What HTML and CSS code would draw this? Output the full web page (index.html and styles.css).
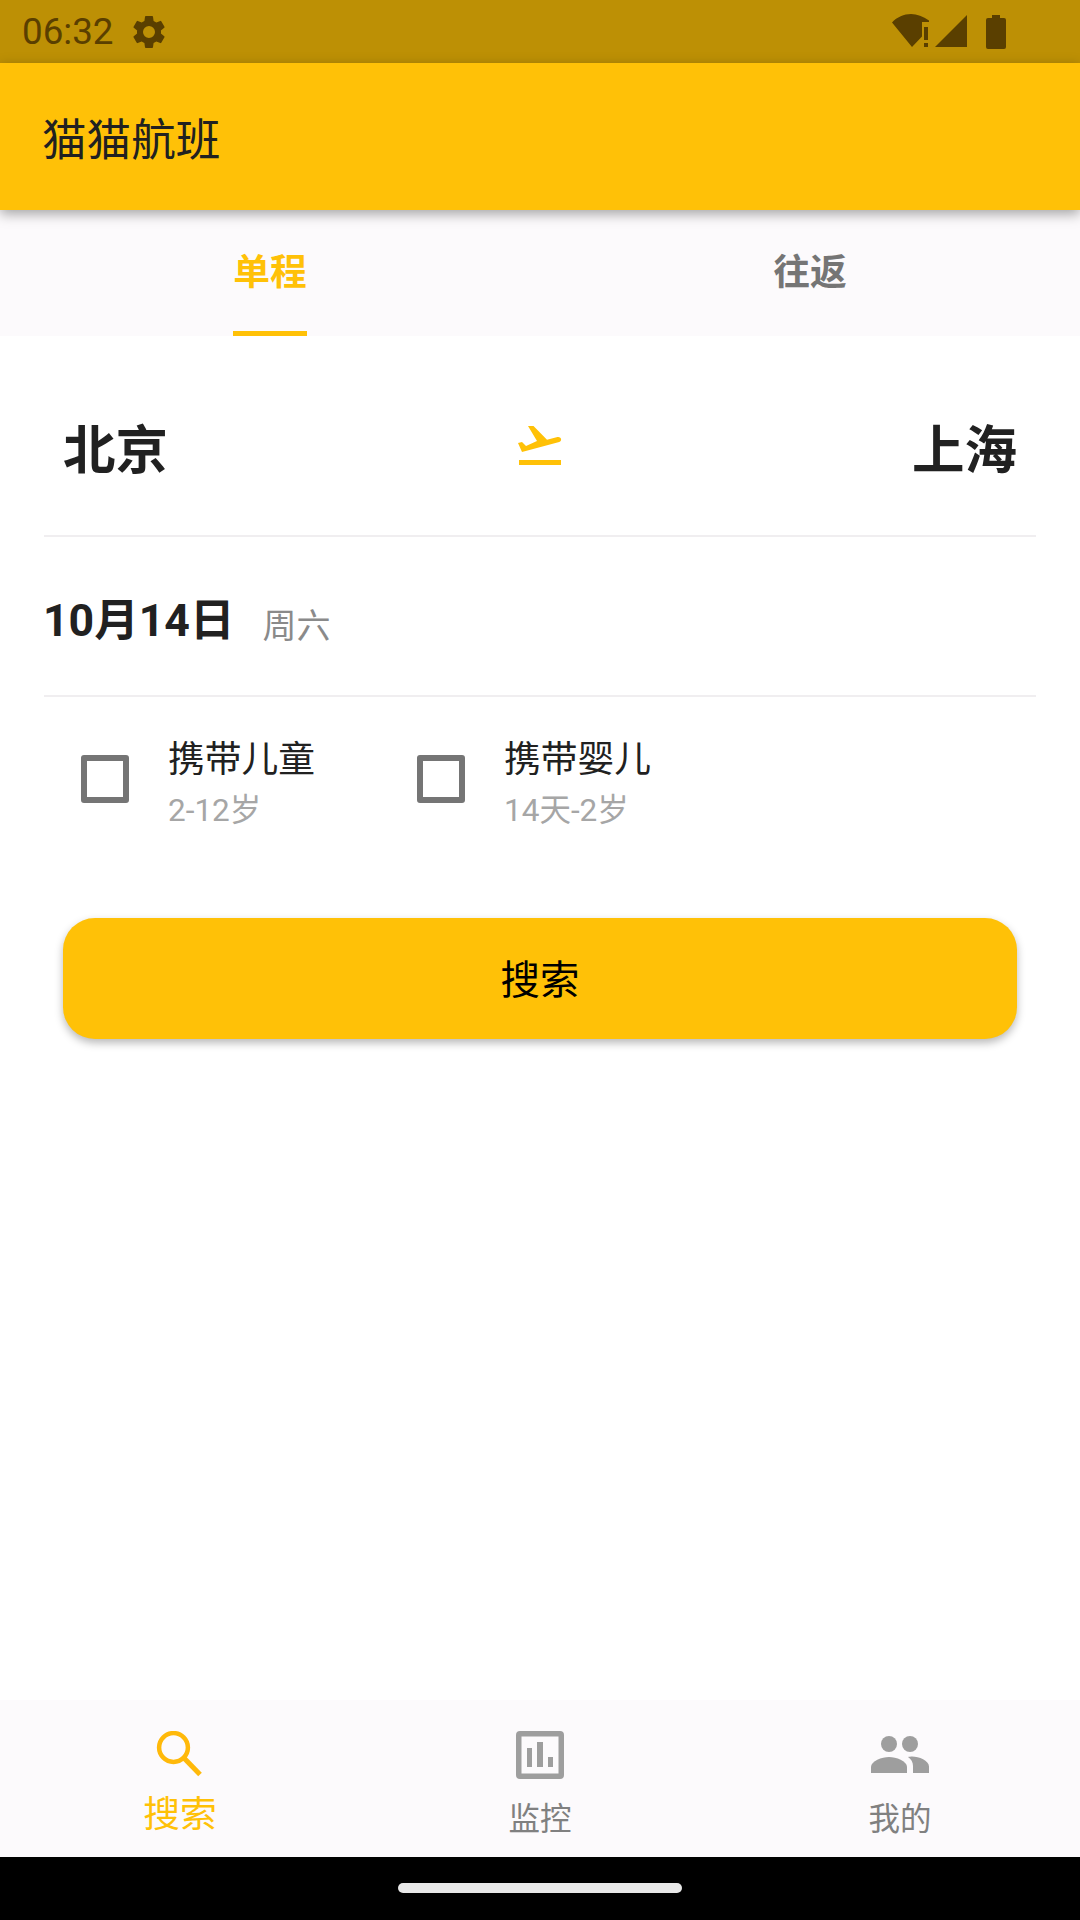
FILE: index.html
```html
<!DOCTYPE html>
<html lang="zh-CN">
<head>
<meta charset="utf-8">
<title>猫猫航班</title>
<link rel="stylesheet" href="styles.css">
</head>
<body>
<div class="screen">
  <header class="status-bar">
    <span class="clock">06:32</span>
    <svg class="gear" viewBox="0 0 24 24"><path d="M19.14 12.94c.04-.3.06-.61.06-.94 0-.32-.02-.64-.07-.94l2.03-1.58a.49.49 0 0 0 .12-.61l-1.92-3.32a.49.49 0 0 0-.59-.22l-2.39.96c-.5-.38-1.03-.7-1.62-.94l-.36-2.54a.48.48 0 0 0-.48-.41h-3.84a.47.47 0 0 0-.47.41l-.36 2.54c-.59.24-1.13.57-1.62.94l-2.39-.96a.48.48 0 0 0-.59.22L2.74 8.87a.47.47 0 0 0 .12.61l2.03 1.58c-.05.3-.09.63-.09.94s.02.64.07.94l-2.03 1.58a.49.49 0 0 0-.12.61l1.92 3.32c.12.22.37.29.59.22l2.39-.96c.5.38 1.03.7 1.62.94l.36 2.54c.05.24.24.41.48.41h3.84c.24 0 .44-.17.47-.41l.36-2.54c.59-.24 1.13-.56 1.62-.94l2.39.96c.22.08.47 0 .59-.22l1.92-3.32a.47.47 0 0 0-.12-.61l-2.01-1.58zM12 15.6A3.6 3.6 0 1 1 12 8.4a3.6 3.6 0 0 1 0 7.2z"/></svg>
    <span class="status-spacer"></span>
    <svg class="wifi" viewBox="0 0 37 33"><path d="M0 8.500C5 3 12 0 19 0c6 0 12 2.500 18 6.500V8H30v14.500L20 33z"/><path d="M32 13h4v13h-4zM32 29h4v4h-4z"/></svg>
    <svg class="signal" viewBox="0 0 32 32"><path d="M32 0v32H0z"/></svg>
    <svg class="battery" viewBox="0 0 20 34"><path d="M6 0h8v3h4a2 2 0 0 1 2 2v27a2 2 0 0 1-2 2H2a2 2 0 0 1-2-2V5a2 2 0 0 1 2-2h4z"/></svg>
  </header>

  <div class="app-bar">猫猫航班</div>

  <nav class="tabs">
    <div class="tab tab-active"><span class="tab-label">单程</span></div>
    <div class="tab"><span class="tab-label">往返</span></div>
  </nav>

  <main class="content">
    <section class="route">
      <span class="city">北京</span>
      <svg class="plane" viewBox="0 0 44 40"><path d="M1 34h42v5H1z"/><path d="M10 0h5.500L29 13.700l10.500-2.700c1.500-.4 3 .3 3.500 1.800.4 1.500-.3 2.800-1.800 3.200L4 26 0 17l4-1 4 4 11-5z"/></svg>
      <span class="city">上海</span>
    </section>

    <section class="date-row">
      <span class="date">10月14日</span>
      <span class="weekday">周六</span>
    </section>

    <section class="options">
      <label class="option">
        <span class="checkbox"></span>
        <span class="option-text">
          <span class="option-title">携带儿童</span>
          <span class="option-sub">2-12岁</span>
        </span>
      </label>
      <label class="option">
        <span class="checkbox"></span>
        <span class="option-text">
          <span class="option-title">携带婴儿</span>
          <span class="option-sub">14天-2岁</span>
        </span>
      </label>
    </section>

    <button class="search-button">搜索</button>
  </main>

  <nav class="bottom-nav">
    <div class="nav-item nav-active">
      <svg class="nav-icon" viewBox="0 0 48 48"><circle cx="17.500" cy="16.500" r="14.400" fill="none" stroke="currentColor" stroke-width="4.500"/><path d="M27 26l17 17.500" fill="none" stroke="currentColor" stroke-width="5"/></svg>
      <span class="nav-label">搜索</span>
    </div>
    <div class="nav-item">
      <svg class="nav-icon" viewBox="0 0 48 48"><path fill-rule="evenodd" d="M4 0h40a4 4 0 0 1 4 4v40a4 4 0 0 1-4 4H4a4 4 0 0 1-4-4V4a4 4 0 0 1 4-4zM5.500 5.500v37h37v-37z"/><path d="M11 17h5v19h-5zM21 11h6v25h-6zM32 26h5v10h-5z"/></svg>
      <span class="nav-label">监控</span>
    </div>
    <div class="nav-item">
      <svg class="nav-icon nav-icon-wide" viewBox="0 0 60 48"><circle cx="19" cy="13" r="8"/><circle cx="40" cy="13" r="8"/><path d="M1 42v-6c0-6 11-10 18-10s18 4 18 10v6z"/><path d="M43 42v-7c0-4-2-7-5-9 1-.3 3-.5 4-.5 7 0 17 4 17 10v6.500z"/></svg>
      <span class="nav-label">我的</span>
    </div>
  </nav>

  <footer class="gesture-bar"><span class="gesture-pill"></span></footer>
</div>
</body>
</html>
```

FILE: styles.css
```css
* { box-sizing: border-box; }

html, body { margin: 0; padding: 0; background: #fff; }

body {
  font-family: Roboto, "Noto Sans CJK SC", sans-serif;
  color: #212121;
}

.screen {
  width: 1080px;
  height: 1920px;
  display: flex;
  flex-direction: column;
  overflow: hidden;
  background: #fff;
}

.status-bar {
  height: 63px;
  flex: none;
  display: flex;
  align-items: center;
  padding: 0 74px 0 22px;
  background: #bd9005;
  color: #5a3f00;
  fill: #5a3f00;
}

.clock { font-size: 36.75px; line-height: 63px; }

.gear { width: 40px; height: 40px; margin-left: 15px; }

.status-spacer { flex: 1; }

.wifi { width: 37px; height: 33px; margin-bottom: 2px; overflow: visible; }

.signal { width: 32px; height: 32px; margin-left: 6px; margin-bottom: 1px; }

.battery { width: 20px; height: 34px; margin-left: 19px; }

.app-bar {
  height: 147px;
  flex: none;
  display: flex;
  align-items: center;
  padding-left: 42px;
  background: #ffc107;
  color: #212121;
  font-size: 44.6px;
  box-shadow: 0 4px 12px rgba(0, 0, 0, .35);
  position: relative;
}

.tabs {
  height: 126px;
  flex: none;
  display: flex;
  background: #fcfafc;
}

.tab {
  flex: 1;
  display: flex;
  justify-content: center;
  color: #757575;
  font-size: 36.75px;
  font-weight: 700;
}

.tab-label {
  height: 126px;
  line-height: 126px;
  border-bottom: 5px solid transparent;
}

.tab-active { color: #ffc107; }

.tab-active .tab-label { border-bottom-color: #ffc107; }

.content { flex: 1; display: flex; flex-direction: column; }

.route {
  height: 201px;
  margin: 0 44px;
  padding: 21px 19px 0;
  display: flex;
  align-items: center;
  justify-content: space-between;
  border-bottom: 2px solid #f0eef0;
}

.city {
  font-size: 52.5px;
  font-weight: 700;
  color: #212121;
}

.plane { width: 44px; height: 40px; fill: #ffc107; }

.date-row {
  height: 160px;
  margin: 0 44px;
  display: flex;
  align-items: center;
  border-bottom: 2px solid #f0eef0;
}

.date { font-size: 44.6px; font-weight: 700; color: #212121; margin-left: -1px; }

.weekday { font-size: 34px; color: #8a8a8a; margin-left: 28px; margin-top: 14px; }

.options {
  display: flex;
  padding: 32px 0 0 81px;
}

.option {
  width: 336px;
  height: 100px;
  display: flex;
  align-items: center;
}

.checkbox {
  width: 48px;
  height: 48px;
  border: 6px solid #757575;
  border-radius: 3px;
  flex: none;
}

.option-text {
  display: flex;
  flex-direction: column;
  margin: 10px 0 0 39px;
}

.option-title { font-size: 36.75px; line-height: 50px; color: #212121; }

.option-sub { font-size: 31.5px; line-height: 44px; margin-top: 4px; color: #a6a6a6; }

.search-button {
  align-self: center;
  width: 954px;
  height: 121px;
  margin-top: 89px;
  padding: 0 0 4px;
  border: 0;
  border-radius: 32px;
  background: #ffc107;
  color: #000;
  font: inherit;
  font-size: 39.4px;
  box-shadow: 0 4px 8px rgba(0, 0, 0, .28);
}

.bottom-nav {
  height: 157px;
  flex: none;
  display: flex;
  background: #fcfafc;
}

.nav-item {
  flex: 1;
  display: flex;
  flex-direction: column;
  align-items: center;
  color: #9e9e9e;
  padding-top: 31px;
}

.nav-icon { width: 48px; height: 48px; fill: currentColor; }

.nav-icon-wide { width: 60px; }

.nav-label {
  font-size: 31.5px;
  line-height: 44px;
  margin-top: 19px;
  color: #808080;
}

.nav-active { color: #ffb90a; }

.nav-active .nav-label { font-size: 36.75px; margin-top: 14px; color: #ffc107; }

.gesture-bar {
  height: 63px;
  flex: none;
  display: flex;
  justify-content: center;
  padding-top: 26px;
  background: #000;
}

.gesture-pill {
  width: 284px;
  height: 10px;
  border-radius: 5px;
  background: #e8e8e8;
}
```
